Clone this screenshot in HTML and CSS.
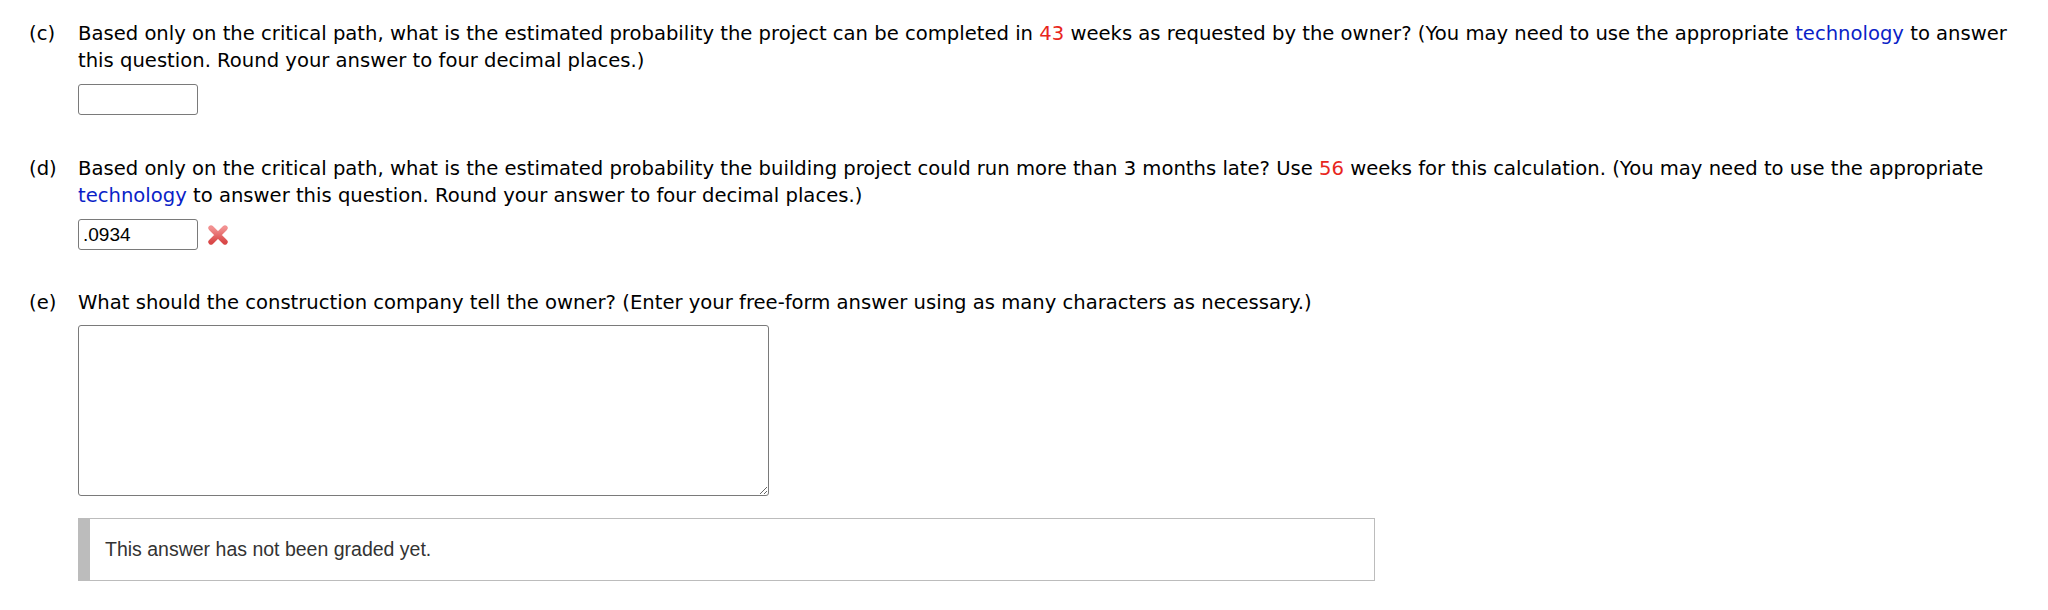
FILE: index.html
```html
<!DOCTYPE html>
<html>
<head>
<meta charset="utf-8">
<link rel="stylesheet" href="styles.css">
</head>
<body>
<div class="page">
  <div class="part part-c">
    <div class="label">(c)</div>
    <div class="content">
      <p class="question">Based only on the critical path, what is the estimated probability the project can be completed in <span class="num">43</span> weeks as requested by the owner? (You may need to use the appropriate <a class="tech" href="#">technology</a> to answer this question. Round your answer to four decimal places.)</p>
      <div class="answer-row">
        <input class="answer" type="text" value="">
      </div>
    </div>
  </div>

  <div class="part part-d">
    <div class="label">(d)</div>
    <div class="content">
      <p class="question">Based only on the critical path, what is the estimated probability the building project could run more than 3 months late? Use <span class="num">56</span> weeks for this calculation. (You may need to use the appropriate <a class="tech" href="#">technology</a> to answer this question. Round your answer to four decimal places.)</p>
      <div class="answer-row">
        <input class="answer" type="text" value=".0934">
        <svg class="wrong" width="22" height="22" viewBox="0 0 22 22" aria-label="incorrect">
          <defs>
            <linearGradient id="xg" x1="0" y1="0" x2="0" y2="1">
              <stop offset="0" stop-color="#f29191"/>
              <stop offset="1" stop-color="#d94848"/>
            </linearGradient>
          </defs>
          <path d="M4 4 L18 18 M18 4 L4 18" stroke="url(#xg)" stroke-width="5.4" stroke-linecap="round"/>
        </svg>
      </div>
    </div>
  </div>

  <div class="part part-e">
    <div class="label">(e)</div>
    <div class="content">
      <p class="question">What should the construction company tell the owner? (Enter your free-form answer using as many characters as necessary.)</p>
      <textarea class="essay"></textarea>
      <div class="grade-note">This answer has not been graded yet.</div>
    </div>
  </div>
</div>
</body>
</html>
```

FILE: styles.css
```css
html, body {
  margin: 0;
  padding: 0;
  background: #ffffff;
}

.page {
  padding: 20px 0 0 29px;
  font-family: "DejaVu Sans", Verdana, sans-serif;
  font-size: 19.6px;
  line-height: 27px;
  color: #000;
}

.part {
  display: flex;
}

.part-d {
  margin-top: 40px;
}

.part-e {
  margin-top: 39px;
}

.label {
  width: 49px;
  flex: none;
}

.content {
  width: 1950px;
}

.question {
  margin: 0;
}

.num {
  color: #e8261c;
}

.tech {
  color: #0b1fc7;
  text-decoration: none;
}

.answer-row {
  display: flex;
  align-items: center;
  gap: 9px;
  margin-top: 10px;
}

.answer {
  box-sizing: border-box;
  width: 120px;
  height: 31px;
  margin: 0;
  padding: 0 4px;
  border: 1px solid #7a7a7a;
  border-radius: 3px;
  font-family: "Liberation Sans", Arial, sans-serif;
  font-size: 19px;
  color: #000;
  background: #fff;
}

.wrong {
  display: block;
}

.essay {
  display: block;
  box-sizing: border-box;
  width: 691px;
  height: 171px;
  margin: 9px 0 0 0;
  border: 1px solid #7a7a7a;
  border-radius: 3px;
  resize: both;
  font-family: "Liberation Sans", Arial, sans-serif;
  font-size: 16px;
}

.grade-note {
  box-sizing: border-box;
  width: 1297px;
  height: 63px;
  margin-top: 22px;
  padding: 0 0 0 15px;
  display: flex;
  align-items: center;
  border: 1px solid #bcbcbc;
  border-left: 12px solid #bcbcbc;
  font-family: "Liberation Sans", Arial, sans-serif;
  font-size: 19.5px;
  color: #333;
}
```
